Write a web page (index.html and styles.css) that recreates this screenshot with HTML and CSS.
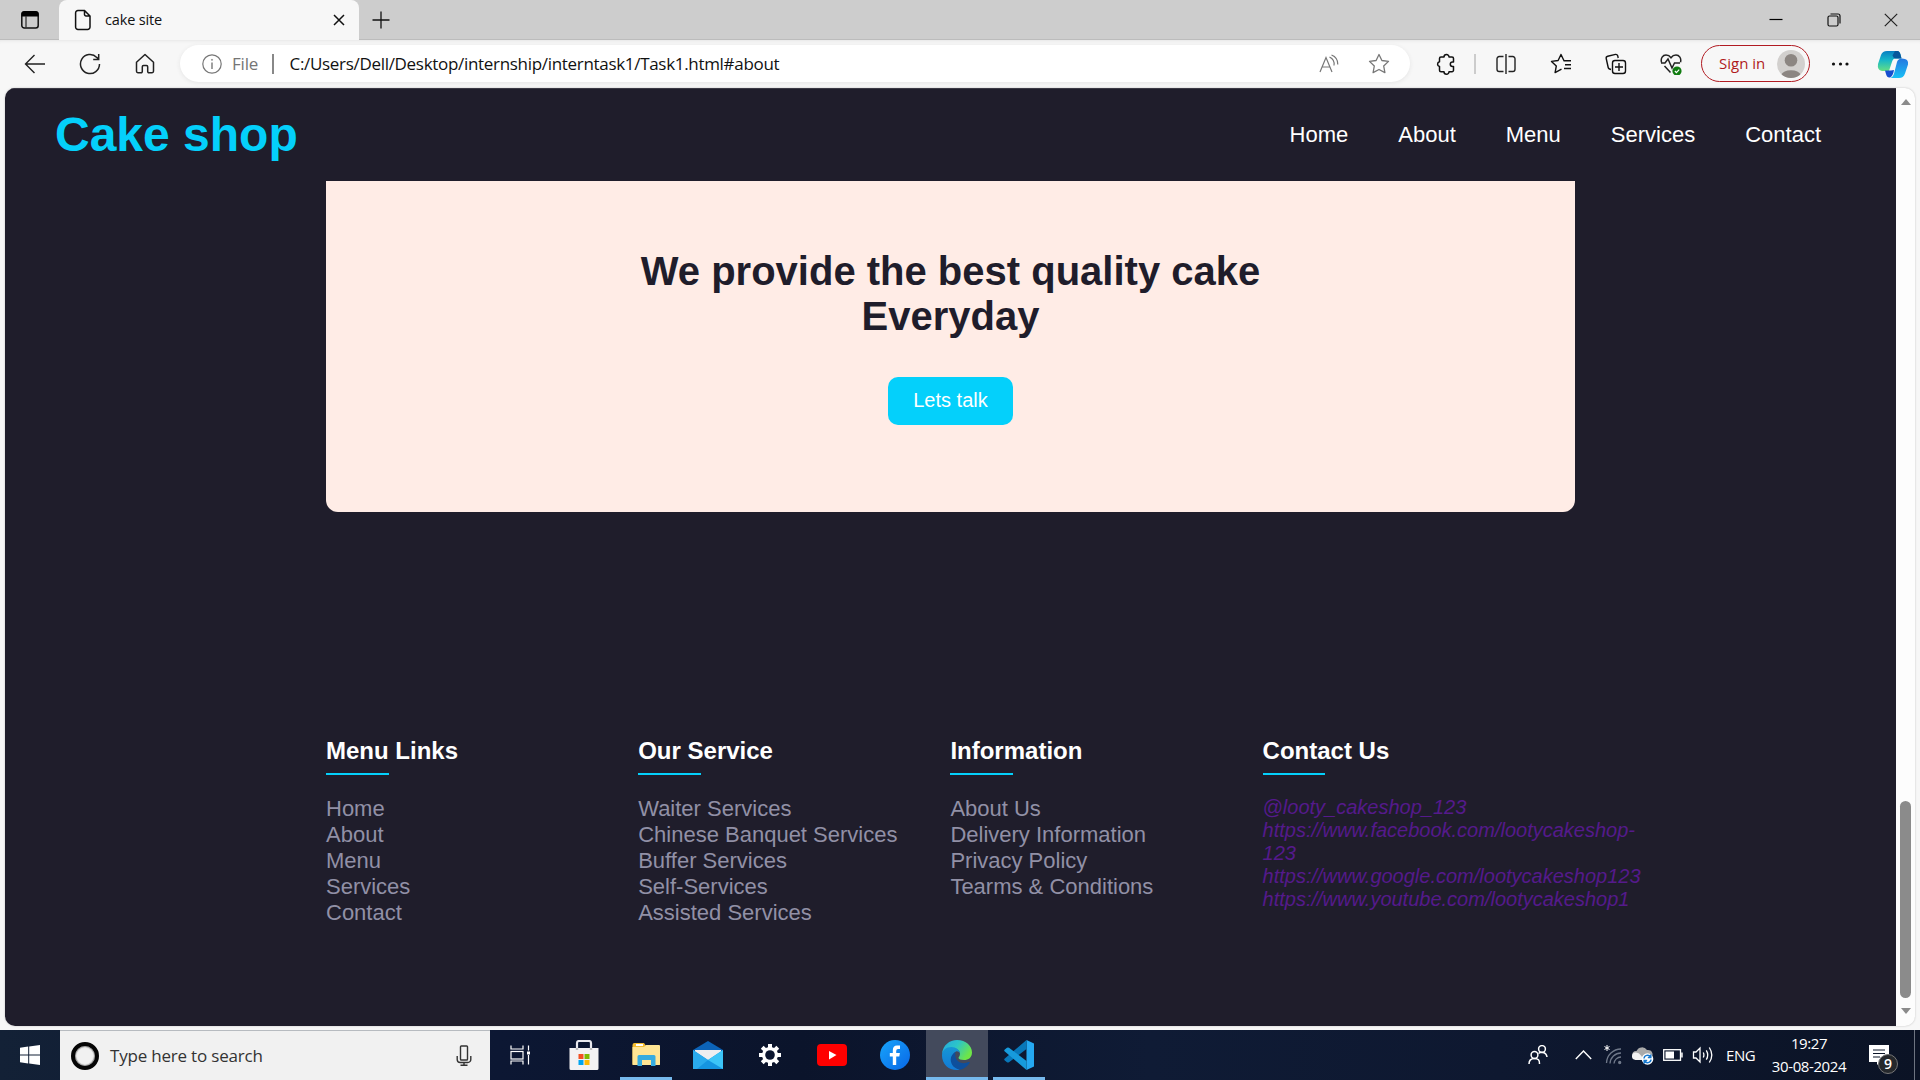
FILE: index.html
```html
<!DOCTYPE html>
<html lang="en">
<head>
<meta charset="utf-8">
<title>cake site</title>
<link rel="stylesheet" href="styles.css">
</head>
<body>
<div class="tabbar">
  <div class="tab-actions"><svg width="20" height="20" viewBox="0 0 20 20"><rect x="1.8" y="2" width="16.4" height="16" rx="2.5" fill="none" stroke="#111" stroke-width="1.5"/><path d="M1.5 6.5V4a3 3 0 0 1 3-3h11a3 3 0 0 1 3 3v2.5z" fill="#000"/><path d="M6 6v12" stroke="#333" stroke-width="1.3"/></svg></div>
  <div class="tab">
    <svg width="18" height="22" viewBox="0 0 18 22" fill="none" stroke="#111" stroke-width="1.5"><path d="M4 1.5h6.5L16 7v11a2.4 2.4 0 0 1-2.4 2.4H4A2.4 2.4 0 0 1 1.600 18V4A2.400 2.400 0 0 1 4 1.500zM10.500 1.500V5.500A1.500 1.500 0 0 0 12 7h4"/></svg>
    <span class="tab-title">cake site</span>
    <svg class="tab-close" width="12" height="12" viewBox="0 0 12 12" stroke="#111" stroke-width="1.5"><path d="M1 1l10 10M11 1L1 11"/></svg>
  </div>
  <svg class="new-tab" width="18" height="18" viewBox="0 0 18 18" stroke="#111" stroke-width="1.300"><path d="M9 .5v17M.5 9h17"/></svg>
  <div class="window-buttons">
    <span class="winbtn"><svg width="14" height="14" viewBox="0 0 14 14"><path d="M.5 6.500h13" stroke="#000" stroke-width="1.200"/></svg></span>
    <span class="winbtn"><svg width="14" height="14" viewBox="0 0 14 14" fill="none" stroke="#111" stroke-width="1.200"><rect x="1" y="3" width="10" height="10" rx="1.500"/><path d="M3.500 1H11a2 2 0 0 1 2 2v7.500"/></svg></span>
    <span class="winbtn"><svg width="14" height="14" viewBox="0 0 14 14" stroke="#222" stroke-width="1.200"><path d="M.8.8l12.400 12.400M13.200.8L.8 13.200"/></svg></span>
  </div>
</div>

<div class="toolbar">
  <span class="tool"><svg width="22" height="22" viewBox="0 0 22 22" fill="none" stroke="#222" stroke-width="1.400"><path d="M21 11H1.500M10.500 2L1.500 11l9 9"/></svg></span>
  <span class="tool"><svg width="22" height="22" viewBox="0 0 22 22" fill="none" stroke="#222" stroke-width="1.500"><path d="M20.500 11A9.500 9.500 0 1 1 17.800 4.400L19.500 6M19.700 1v5.500h-5.500"/></svg></span>
  <span class="tool"><svg width="22" height="22" viewBox="0 0 22 22" fill="none" stroke="#222" stroke-width="1.500" stroke-linejoin="round"><path d="M2.500 9.300L11 1.500l8.500 7.800v9a1.400 1.400 0 0 1-1.400 1.400h-3.200a1.200 1.200 0 0 1-1.200-1.200v-4.800a1.200 1.200 0 0 0-1.200-1.200h-3a1.200 1.200 0 0 0-1.200 1.200v4.800a1.200 1.200 0 0 1-1.200 1.200H3.900a1.400 1.400 0 0 1-1.400-1.400z"/></svg></span>
  <div class="address">
    <svg width="20" height="20" viewBox="0 0 20 20" fill="none" stroke="#777" stroke-width="1.200"><circle cx="10" cy="10" r="9.200"/><path d="M10 8.500v6.500" stroke-width="1.400"/><circle cx="10" cy="5.800" r=".6" fill="#777" stroke-width=".6"/></svg>
    <span class="scheme">File</span>
    <span class="divider"></span>
    <span class="url">C:/Users/Dell/Desktop/internship/interntask1/Task1.html#about</span>
    <span class="address-icons">
      <svg width="20" height="20" viewBox="0 0 20 20" fill="none" stroke="#777" stroke-width="1.200"><path d="M1 18L7 3.500 13 18M3 13h8M10.500 3a8 8 0 0 1 4.500 8.500M12.500 1a9.800 9.800 0 0 1 6.300 9.500"/></svg>
      <svg width="22" height="22" viewBox="0 0 22 22" fill="none" stroke="#777" stroke-width="1.300" stroke-linejoin="round"><path d="M11 1.500l2.900 6 6.600.9-4.800 4.600 1.200 6.600L11 16.500l-5.900 3.100L6.300 13 1.500 8.400l6.600-.9z"/></svg>
    </span>
  </div>
  <span class="tool puzzle"><svg width="20" height="22" viewBox="0 0 20 22" fill="none" stroke="#111" stroke-width="1.500" stroke-linejoin="round"><path d="M3.500 5.500A1.500 1.500 0 0 1 5 4h3a2.500 2.500 0 0 1 5 0h3a1.500 1.500 0 0 1 1.500 1.500V9h-1a2.200 2.200 0 0 0 0 4.400h1v3.800A1.500 1.500 0 0 1 16 18.700h-3a2.500 2.500 0 0 1-5 0H5a1.500 1.500 0 0 1-1.500-1.500v-3.700a2.400 2.400 0 0 1 0-4.700z"/></svg></span>
  <span class="tool-separator"></span>
  <span class="tool"><svg width="20" height="20" viewBox="0 0 20 20" fill="none" stroke="#222" stroke-width="1.400"><path d="M7.500 2.500H3.200A2.200 2.200 0 0 0 1 4.700v10.600a2.200 2.200 0 0 0 2.200 2.200h4.300M12.500 2.500h4.300A2.200 2.200 0 0 1 19 4.700v10.600a2.200 2.200 0 0 1-2.200 2.200h-4.300M10 0v20"/></svg></span>
  <span class="tool"><svg width="22" height="22" viewBox="0 0 22 22" fill="none" stroke="#111" stroke-width="1.400" stroke-linejoin="round"><path d="M14 7.700L11 1.500l-2.900 6-6.600.9L6.300 13l-1.200 6.600 6.400-3.400M13.500 7.700h7.500M15 11.700h6M14 15.500h7"/></svg></span>
  <span class="tool"><svg width="22" height="22" viewBox="0 0 22 22" fill="none" stroke="#111" stroke-width="1.400"><path d="M6 16.500L4.500 16a2 2 0 0 1-1.300-1.500L1.200 5.500a2 2 0 0 1 1.500-2.300L10.500 1.400a2 2 0 0 1 2.200 1.300L13.200 5"/><rect x="7.500" y="7.500" width="13" height="13" rx="2.500"/><path d="M14 10v8M10 14h8"/></svg></span>
  <span class="tool"><svg width="22" height="22" viewBox="0 0 22 22" fill="none" stroke="#222" stroke-width="1.500"><path d="M1.500 9.300C.4 5.300 2.800 2 6 2c2 0 3.800 1 5 2.700C12.200 3 14 2 16 2c3.200 0 5.600 3.300 4.500 7.300M1 10h4l3-4 4 9 2.500-5H20M4.500 13l6 6.500"/><circle cx="17" cy="18" r="4.600" fill="#107c10" stroke="none"/><path d="M14.900 18l1.500 1.600 2.800-3" stroke="#fff" stroke-width="1.200"/></svg></span>
  <div class="signin"><span class="signin-text">Sign in</span><svg width="28" height="28" viewBox="0 0 28 28"><clipPath id="av"><circle cx="14" cy="14" r="14"/></clipPath><g clip-path="url(#av)"><rect width="28" height="28" fill="#d2d0ce"/><circle cx="14" cy="10.300" r="6.300" fill="#8c8682"/><path d="M4 25a10.500 7 0 0 1 20 0v3H4z" fill="#8c8682"/></g></svg></div>
  <span class="tool more"><svg width="18" height="6" viewBox="0 0 18 6" fill="#111"><circle cx="2.500" cy="3" r="1.600"/><circle cx="9.500" cy="3" r="1.600"/><circle cx="16" cy="3" r="1.600"/></svg></span>
  <svg class="copilot" width="32" height="28" viewBox="0 0 32 28"><defs><linearGradient id="c1" x1="0" y1="0" x2="0" y2="1"><stop offset="0" stop-color="#087fc2"/><stop offset=".45" stop-color="#16b6c9"/><stop offset="1" stop-color="#65df84"/></linearGradient><linearGradient id="c2" x1="0" y1="0" x2="0" y2="1"><stop offset="0" stop-color="#2577e0"/><stop offset="1" stop-color="#19c0f5"/></linearGradient></defs><path d="M10 1h10.500q2 0 3 3.500l1 4h-6q-2.500 0-3.400 3L12 21H5q-5-1-4-7l3-9q1.500-4 6-4z" fill="url(#c1)"/><path d="M18 1h2.500q2 0 3 3.500l1 4h-6q-2 0-3-3z" fill="#07589c"/><path d="M25 8.500q7 0 6 6l-3 9Q26.500 28 22 28H13q3-.5 4.200-5L20 12q1-3.500 5-3.500z" fill="url(#c2)"/><path d="M8 20.500h6L17 20q-1 6-4 7.500-3 .5-4-3.500z" fill="#164ecf"/></svg>
</div>

<div class="viewport">
  <div class="site">
    <header class="site-header">
      <div class="logo">Cake shop</div>
      <nav class="nav"><a>Home</a><a>About</a><a>Menu</a><a>Services</a><a>Contact</a></nav>
    </header>
    <section class="cta">
      <h1>We provide the best quality cake<br>Everyday</h1>
      <a class="cta-button">Lets talk</a>
    </section>
    <footer class="footer">
      <div class="col"><h2>Menu Links</h2><ul><li>Home</li><li>About</li><li>Menu</li><li>Services</li><li>Contact</li></ul></div>
      <div class="col"><h2>Our Service</h2><ul><li>Waiter Services</li><li>Chinese Banquet Services</li><li>Buffer Services</li><li>Self-Services</li><li>Assisted Services</li></ul></div>
      <div class="col"><h2>Information</h2><ul><li>About Us</li><li>Delivery Information</li><li>Privacy Policy</li><li>Tearms &amp; Conditions</li></ul></div>
      <div class="col"><h2>Contact Us</h2><address>@looty_cakeshop_123<br>https://www.facebook.com/lootycakeshop-<br>123<br>https://www.google.com/lootycakeshop123<br>https://www.youtube.com/lootycakeshop1</address></div>
    </footer>
  </div>
  <div class="scrollbar"><span class="arrow up"></span><span class="thumb"></span><span class="arrow down"></span></div>
</div>

<div class="taskbar">
  <div class="start"><svg width="20" height="20" viewBox="0 0 20 20" fill="#fff"><path d="M0 2.800L8.200 1.600v7.900H0zM9.200 1.500L20 0v9.500H9.200zM0 10.500h8.200v7.900L0 17.200zM9.200 10.500H20V20L9.200 18.500z"/></svg></div>
  <div class="search"><span class="cortana"></span><span class="search-text">Type here to search</span>
    <svg width="16" height="22" viewBox="0 0 16 22" fill="none" stroke="#333" stroke-width="1.400"><rect x="4.500" y="1" width="7" height="14" rx=".8"/><path d="M1.200 11v3.500a3 3 0 0 0 3 3h7.600a3 3 0 0 0 3-3V11M8 17.500v3M4.500 20.300h7"/></svg></div>
  <div class="app taskview"><svg width="22" height="20" viewBox="0 0 22 20" fill="none" stroke="#fff" stroke-width="1.200"><path d="M1 .5V4h12V.5M1 19.500V16h12v3.500M18.500 .5v5M18.500 10v9.500"/><rect x="1" y="6.500" width="12" height="7.500"/><rect x="17" y="6.500" width="3" height="3" fill="#fff" stroke="none"/></svg></div>
  <div class="app"><svg width="30" height="30" viewBox="0 0 30 30"><path d="M8 10V3q0-2 2-2h10q2 0 2 2v7" fill="none" stroke="#e9e9ee" stroke-width="2.200"/><path d="M.5 8h29v20.500a1.500 1.500 0 0 1-1.500 1.500H2A1.500 1.500 0 0 1 .5 28.500z" fill="#f3f2f3"/><path d="M6.800 8h2.400v2H6.800zM20.800 8h2.400v2h-2.400z" fill="#bbb"/><path d="M9.500 14h5v5h-5z" fill="#f25022"/><path d="M15.500 14h5v5h-5z" fill="#7fba00"/><path d="M9.500 20h5v5h-5z" fill="#00a4ef"/><path d="M15.500 20h5v5h-5z" fill="#ffb900"/></svg></div>
  <div class="app running"><svg width="28" height="26" viewBox="0 0 28 26"><path d="M.5 3q0-2 2-2H12l2 3h13q1 0 1 1v18H.5z" fill="#f5bd30"/><path d="M4 2h7v2H4z" fill="#fff"/><path d="M.5 5H12l2-2h13q1 0 1 1v18q0 1-1 1H1.500q-1 0-1-1z" fill="#ffe594"/><path d="M5.500 24V14.500q0-1.500 1.500-1.500h15q1.500 0 1.500 1.500V24H19v-6h-9v6z" fill="#36ace0"/></svg></div>
  <div class="app"><svg width="30" height="28" viewBox="0 0 30 28"><path d="M0 9L15 0l15 9v4H0z" fill="#0c63b7"/><path d="M2 9h26v8L15 22 2 17z" fill="#eeeef0"/><path d="M0 9l15 10L30 9v19H0z" fill="#1595e1"/><path d="M0 9l15 10L4 28H0z" fill="#2aabed"/><path d="M30 9L15 19l15 9z" fill="#3cc5f8"/></svg></div>
  <div class="app"><svg width="22" height="22" viewBox="-11 -11 22 22" fill="#fff"><rect x="-2" y="-11" width="4" height="22"/><rect x="-11" y="-2" width="22" height="4"/><g transform="rotate(45)"><rect x="-2" y="-11" width="4" height="22"/><rect x="-11" y="-2" width="22" height="4"/></g><circle r="8"/><circle r="4.800" fill="#0b1630"/></svg></div>
  <div class="app"><svg width="30" height="22" viewBox="0 0 30 22"><rect width="30" height="22" rx="4" fill="#f00"/><path d="M12 7l7.500 4L12 15.500z" fill="#fff"/></svg></div>
  <div class="app"><svg width="30" height="30" viewBox="0 0 30 30"><defs><linearGradient id="fb" x1="0" y1="0" x2="1" y2="1"><stop offset="0" stop-color="#18a5fb"/><stop offset="1" stop-color="#0866e6"/></linearGradient></defs><circle cx="15" cy="15" r="15" fill="url(#fb)"/><path d="M12.800 25v-8.500h-3V13h3v-2.500Q12.800 5.500 17 5.500h3V9h-2q-1.800 0-1.800 2v2h3.700l-.6 3.500h-3.100V25z" fill="#fff"/></svg></div>
  <div class="app active running"><svg width="30" height="30" viewBox="0 0 30 30"><defs><linearGradient id="e1" x1="0" y1="0" x2="1" y2=".5"><stop offset="0" stop-color="#25a7e2"/><stop offset=".5" stop-color="#2cc5c8"/><stop offset="1" stop-color="#6ee647"/></linearGradient><linearGradient id="e2" x1="0" y1="0" x2="0" y2="1"><stop offset="0" stop-color="#1696d4"/><stop offset="1" stop-color="#127ad6"/></linearGradient></defs><path d="M0 14C1 5 7.500 0 15 0c9 0 15 6 15 12.500 0 5-3.500 7.500-8 7.500-3 0-5.500-1-5.500-2.300 0-.8 1.500-1.500 1.500-4C18 10 14 8 9.500 8 5 8 1.500 10.500 0 14z" fill="url(#e1)"/><path d="M0 15.500C0 10 4 7 9.500 7c4.500 0 8.500 3 8.500 6.700 0-1-1-2.500-3.500-2.500-2.500 1-4.300 4-4.300 7C10.200 24 14 28 18 29.700 8 31.500 0 25 0 15.500z" fill="url(#e2)"/><path d="M13.500 12c-2.500 1.500-4.800 4-4.800 7.500C8.700 25 13 29 18 29.700c4.500-1 8-3.700 9.700-7 .3-.7-.3-1-1-.6-7 3-15-.6-13.200-10.100z" fill="#0e4f9c"/></svg></div>
  <div class="app running"><svg width="30" height="30" viewBox="0 0 30 30"><path d="M22.500 0L30 3.500v23L22.500 30z" fill="#25a9f2"/><path d="M22.500 0v9L5 22.200q-1 .8-2 0L.8 20.400q-1.200-1 0-2z" fill="#0877b9"/><path d="M22.500 30v-9L5 7.800q-1-.8-2 0L.8 9.600q-1.200 1 0 2z" fill="#179bdc"/></svg></div>
  <div class="tray">
    <span class="tray-icon people"><svg width="20" height="20" viewBox="0 0 20 20" fill="none" stroke="#fff" stroke-width="1.500"><circle cx="6.500" cy="10" r="3.400"/><path d="M1 19q0-5.600 5.500-5.600T11.500 19"/><circle cx="14" cy="4" r="3.400"/><path d="M10.500 8.500q2-1.500 4.500-1.100 3.500.6 4 4.600"/></svg></span>
    <span class="tray-icon"><svg width="17" height="10" viewBox="0 0 17 10" fill="none" stroke="#fff" stroke-width="1.400"><path d="M.8 9l7.700-8 7.700 8"/></svg></span>
    <span class="tray-icon"><svg width="18" height="20" viewBox="0 0 18 20" fill="none" stroke="#70798a" stroke-width="1.300"><path d="M2.500 18A14.500 14.500 0 0 1 17 4M6 18.500A11 11 0 0 1 17 8M10 18.500a7 7 0 0 1 7-6.500"/><circle cx="15.700" cy="17.500" r="1" fill="#70798a"/><path d="M3 0v6M.5 1.500l5 3M5.500 1.500l-5 3" stroke="#fff" stroke-width="1"/></svg></span>
    <span class="tray-icon"><svg width="22" height="20" viewBox="0 0 22 20"><path d="M4 14a4 4 0 0 1 .5-8A6 6 0 0 1 15 5a4.500 4.500 0 0 1 2 9z" fill="#aaa"/><path d="M3.500 15A3.700 3.700 0 0 1 4 7.500q3 0 5 3l3 4.500z" fill="#f3f3f3"/><circle cx="15.500" cy="14" r="5.800" fill="#fff"/><path d="M12 13.500a3.500 3.500 0 0 1 6.500-1.500M19 14.500A3.500 3.500 0 0 1 12.500 16M18.800 9.500V12.500h-3M12.200 18.500V15.500h3" fill="none" stroke="#1678cf" stroke-width="1.500"/></svg></span>
    <span class="tray-icon"><svg width="20" height="12" viewBox="0 0 20 12"><rect x=".7" y=".7" width="16.800" height="10.600" fill="none" stroke="#fff" stroke-width="1.300"/><path d="M2.500 2.500h8.500v7H2.500zM18.200 3.500h1.500v5h-1.500z" fill="#fff"/></svg></span>
    <span class="tray-icon"><svg width="22" height="18" viewBox="0 0 22 18" fill="none" stroke="#fff" stroke-width="1.300"><path d="M1.500 6H4l4-4v14l-4-4H1.500z"/><path d="M11.300 6.500q1.200 2.500 0 5M14.300 4.300q2.800 4.700 0 9.400M17.300 1.500q5 7.500 0 15"/></svg></span>
    <span class="lang">ENG</span>
    <div class="clock"><span>19:27</span><span class="date">30-08-2024</span></div>
    <div class="notify"><svg width="20" height="20" viewBox="0 0 20 20"><path d="M0 0h20v17h-9l-3 3v-3H0z" fill="#fff"/><path d="M4 5h12M4 8.500h12M4 12h7" stroke="#0c1628" stroke-width="1.200"/></svg><span class="badge">9</span></div>
    <span class="show-desktop"></span>
  </div>
</div>
</body>
</html>
```
FILE: styles.css
```css
* { box-sizing: border-box; }
body {
  margin: 0;
  width: 1920px;
  height: 1080px;
  overflow: hidden;
  display: flex;
  flex-direction: column;
  background: #f7f7f7;
  font-family: "Open Sans", "Noto Sans", sans-serif;
}
svg { display: block; flex: none; }

.tabbar {
  height: 40px;
  flex: none;
  display: flex;
  align-items: center;
  background: #cdcdcd;
  box-shadow: inset 0 -1px 0 #bcbcbc;
}
.tab-actions {
  width: 59px;
  height: 40px;
  padding: 10px 0 0 20px;
  border-bottom-right-radius: 7px;
}
.tab {
  width: 300px;
  height: 40px;
  display: flex;
  align-items: center;
  padding: 0 14px 0 15px;
  background: #f7f7f7;
  border-radius: 8px 8px 0 0;
}
.tab-title { margin-left: 13px; padding-bottom: 2px; font-size: 14.500px; letter-spacing: -.15px; color: #111; }
.tab-close { margin-left: auto; }
.new-tab { margin-left: 13px; }
.window-buttons { display: flex; margin-left: auto; }
.winbtn { width: 57.500px; display: flex; justify-content: center; }

.toolbar {
  height: 48px;
  flex: none;
  display: flex;
  align-items: center;
  padding: 0 0 1px 7px;
  box-shadow: inset 0 4px 4px -4px #ddd;
}
.tool { width: 55px; flex: none; display: flex; justify-content: center; }
.address {
  width: 1230px;
  height: 37px;
  flex: none;
  display: flex;
  align-items: center;
  margin-left: 8px;
  padding: 0 20px 0 22px;
  border-radius: 19px;
  background: #fff;
  box-shadow: 0 1px 4px #e4e4e4;
}
.scheme { margin-left: 10px; padding-bottom: 1px; width: 27px; font-size: 17px; letter-spacing: -.2px; color: #757575; }
.divider { width: 1.500px; height: 20px; margin: 0 16px 0 13px; background: #888; }
.url { padding-bottom: 1px; font-size: 17px; letter-spacing: -.31px; color: #111; white-space: nowrap; }
.address-icons { display: flex; gap: 29px; align-items: center; margin-left: auto; }
.puzzle { margin-left: 8px; }
.tool-separator { width: 2px; height: 20px; margin: 0 2px 0 1px; background: #ccc; }
.signin {
  width: 109px;
  height: 37px;
  flex: none;
  display: flex;
  align-items: center;
  justify-content: space-between;
  margin-left: 3px;
  padding: 0 4px 0 17px;
  border: 1.500px solid #b11b22;
  border-radius: 19px;
  color: #b01a20;
}
.signin-text { padding-bottom: 1px; font-size: 15px; letter-spacing: 0; }
.more { margin-left: 2px; }
.copilot { margin-left: 10px; }

.viewport {
  height: 938px;
  flex: none;
  display: flex;
  margin: 0 5px 4px;
  border-radius: 10px;
  overflow: hidden;
  background: #fdfdfd;
  box-shadow: 0 0 2px #bbb;
}
.site {
  width: 1891px;
  flex: none;
  display: flex;
  flex-direction: column;
  align-items: center;
  background: #1f1d2b;
  font-family: "Liberation Sans", Arial, sans-serif;
}
.site-header {
  width: 100%;
  height: 93px;
  display: flex;
  align-items: center;
  justify-content: space-between;
  padding: 0 75px 0 50px;
  border-top: 1px solid #3b3945;
}
.logo { padding-bottom: 2px; font-size: 48px; font-weight: 700; color: #04d0fb; }
.nav { display: flex; gap: 50px; font-size: 22px; color: #fff; }
.cta {
  width: 1249px;
  height: 331px;
  display: flex;
  flex-direction: column;
  align-items: center;
  padding-top: 68px;
  border-radius: 0 0 12px 12px;
  background: #ffece6;
}
.cta h1 {
  margin: 0 0 38px;
  font-size: 40px;
  line-height: 45px;
  text-align: center;
  color: #1f1d2b;
}
.cta-button {
  height: 48px;
  padding: 0 25px;
  line-height: 46px;
  border-radius: 10px;
  background: #04d0fb;
  color: #fff;
  font-size: 20px;
}
.footer {
  width: 1249px;
  display: grid;
  grid-template-columns: repeat(4, 312.200px);
  margin-top: 225px;
}
.col h2 {
  margin: 0 0 21px;
  font-size: 24px;
  line-height: 28px;
  color: #fff;
}
.col h2::after {
  content: "";
  display: block;
  width: 62.500px;
  height: 2px;
  margin-top: 8px;
  background: #04d0fb;
}
.col ul { margin: 0; padding: 0; list-style: none; color: #9190a6; font-size: 22px; line-height: 26px; }
.col address { color: #551a8b; font-size: 20px; line-height: 23px; white-space: nowrap; }

.scrollbar { flex: 1; display: flex; flex-direction: column; align-items: center; }
.arrow { border: 5.500px solid transparent; }
.up { border-top: 0; border-bottom: 6px solid #8b8b8b; margin-top: 11px; }
.down { border-bottom: 0; border-top: 6px solid #8b8b8b; margin-top: 10px; }
.thumb { width: 11px; height: 197px; margin-top: 696px; border-radius: 6px; background: #8b8b8b; }

.taskbar {
  height: 50px;
  flex: none;
  display: flex;
  background: linear-gradient(90deg, #132136 0, #0c1733 500px, #0b142b 800px, #0f1b35 1150px, #0e1830 1500px, #0b1325 1920px);
}
.start { width: 60px; display: flex; align-items: center; justify-content: center; }
.search {
  width: 430px;
  display: flex;
  align-items: center;
  padding: 0 18px 0 11px;
  border-top: 1px solid #b7bbc0;
  background: #f1f1f1;
}
.cortana { width: 28px; height: 28px; border: 4px solid #050505; border-radius: 50%; box-shadow: inset 0 0 1px 1px #999; }
.search-text { margin-left: 11px; font-size: 17px; letter-spacing: -.2px; color: #333; }
.search svg { margin-left: auto; }
.app {
  width: 62.100px;
  flex: none;
  display: flex;
  align-items: center;
  justify-content: center;
  position: relative;
}
.taskview { width: 62.500px; margin-right: .5px; }
.running::after {
  content: "";
  position: absolute;
  bottom: 0;
  left: 5px;
  right: 5px;
  height: 3px;
  background: #76b9ed;
}
.active { background: #434a5c; }
.active::after { left: 0; right: 0; }
.tray { flex: 1; display: flex; align-items: center; justify-content: flex-end; color: #fff; }
.tray-icon { width: 30px; display: flex; justify-content: center; }
.people { margin-right: 15px; }
.lang { margin-left: 8px; width: 30px; padding-bottom: 1px; font-size: 15px; letter-spacing: -.4px; }
.clock {
  width: 106px;
  display: flex;
  flex-direction: column;
  align-items: center;
  font-size: 15px;
  line-height: 23px;
  letter-spacing: -.4px;
}
.notify { width: 52px; padding-left: 7px; position: relative; }
.badge {
  position: absolute;
  left: 16px;
  top: 9px;
  width: 20px;
  height: 20px;
  border: 1px solid #777;
  border-radius: 50%;
  background: #25282c;
  font-size: 14px;
  font-weight: 600;
  line-height: 18px;
  text-align: center;
}
.show-desktop { width: 6px; height: 50px; border-left: 1px solid #6d7480; }
```
